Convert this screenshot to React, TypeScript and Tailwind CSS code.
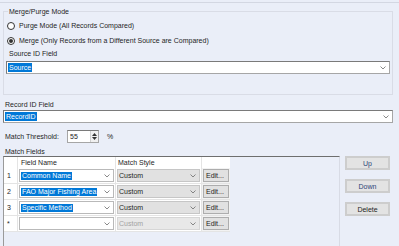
import React from "react";

const rows = [
  { id: "1", field: "Common Name" },
  { id: "2", field: "FAO Major Fishing Area" },
  { id: "3", field: "Specific Method" },
  { id: "*", field: "" },
];

function Chevron({ className = "" }: { className?: string }) {
  return (
    <svg width="6" height="4" viewBox="0 0 6 4" className={className} aria-hidden="true">
      <path d="M0.5 0.5 L3 3 L5.5 0.5" fill="none" stroke="#6b6b6b" strokeWidth="0.8" />
    </svg>
  );
}

function Radio({ checked, label }: { checked?: boolean; label: string }) {
  return (
    <div className="flex h-[13px] items-center pl-[3px]">
      <span className="flex h-[8px] w-[8px] items-center justify-center rounded-full border border-[#333] bg-white">
        {checked && <span className="h-[4px] w-[4px] rounded-full bg-[#333]" />}
      </span>
      <span className="ml-[4px]">{label}</span>
    </div>
  );
}

function ComboInput({ value, className = "" }: { value: string; className?: string }) {
  return (
    <div
      className={`flex h-[13px] items-center justify-between border border-[#a6a6a6] border-t-[#7a7a7a] border-l-[#7a7a7a] bg-white pl-[1px] pr-[3px] ${className}`}
    >
      <span className="bg-[#0078d7] px-px leading-[9px] text-white">{value}</span>
      <Chevron />
    </div>
  );
}

function SideButton({ label, className = "" }: { label: string; className?: string }) {
  return (
    <button className={`flex h-[14px] w-[45px] items-center justify-center border-2 border-[#cdcdcd] bg-[#e3e3e3] leading-none ${className}`}>
      {label}
    </button>
  );
}

export default function App() {
  return (
    <div className="h-[246px] w-[399px] overflow-hidden bg-[#eaeef8] font-['Liberation_Sans',Arial,sans-serif] text-[7px] leading-[9px] text-[#1e1e1e]">
      <div className="mt-[2px] border-t border-[#d3d7e2]" />

      <fieldset className="ml-[3px] mt-[4px] w-[390px] border border-[#d9dce6]">
        <legend className="ml-[4px] px-px leading-[9px]">Merge/Purge Mode</legend>
        <div className="mt-[3px]">
          <Radio label="Purge Mode (All Records Compared)" />
        </div>
        <div className="mt-[2px]">
          <Radio checked label="Merge (Only Records from a Different Source are Compared)" />
        </div>
        <div className="flex h-[13px] items-center pl-[5px]">Source ID Field</div>
        <ComboInput value="Source" className="ml-[2px] mt-[1px] w-[384px]" />
        <div className="h-[20px]" />
      </fieldset>

      <div className="flex h-[15px] items-center pl-[5px] pt-[3px]">Record ID Field</div>
      <ComboInput value="RecordID" className="ml-[3px] w-[390px]" />

      <div className="mt-[7px] flex h-[13px] items-center">
        <span className="ml-[5px] w-[62px]">Match Threshold:</span>
        <div className="flex h-[13px] w-[32px] items-center justify-between border border-[#a6a6a6] border-t-[#7a7a7a] bg-white pl-[2px]">
          <span>55</span>
          <div className="flex h-full w-[8px] flex-col items-center justify-center gap-[1px] border-l border-[#d0d0d0] bg-[#f0f0f0]">
            <svg width="5" height="3" viewBox="0 0 5 3"><path d="M0 3 L2.5 0 L5 3 Z" fill="#333" /></svg>
            <svg width="5" height="3" viewBox="0 0 5 3"><path d="M0 0 L2.5 3 L5 0 Z" fill="#333" /></svg>
          </div>
        </div>
        <span className="ml-[8px]">%</span>
      </div>

      <div className="flex h-[13px] items-center pl-[5px] pt-[3px]">Match Fields</div>

      <div className="flex">
        <div className="ml-[3px] h-[100px] w-[337px] border-t border-l border-r border-t-[#6e6e6e] border-l-[#9a9a9a] border-r-[#d8dbe5]">
          <div className="flex h-[11px] w-[226px] bg-white">
            <div className="w-[14px] border-r border-[#e4e4e4]" />
            <div className="flex w-[98px] items-center border-r border-[#e4e4e4] pl-[3px]">Field Name</div>
            <div className="flex w-[86px] items-center border-r border-[#e4e4e4] pl-[2px]">Match Style</div>
            <div className="w-[28px]" />
          </div>
          {rows.map((row) => (
            <div key={row.id} className="flex h-[16px] w-[226px]">
              <div className="flex w-[14px] items-center border-b border-r border-[#e4e4e4] bg-white pl-[3px]">
                {row.id}
              </div>
              <div className="w-[98px] border-b border-r border-[#e4e4e4] bg-white p-px">
                <div className="flex h-full items-center justify-between border border-[#b9b9b9] pl-px pr-[3px]">
                  {row.field ? (
                    <span className="bg-[#0078d7] px-px leading-[8px] text-white">{row.field}</span>
                  ) : (
                    <span />
                  )}
                  <Chevron />
                </div>
              </div>
              <div className="w-[86px] border-b border-r border-[#e4e4e4] bg-white p-px">
                <div
                  className={`flex h-full items-center justify-between border pl-px pr-[3px] ${
                    row.id === "*"
                      ? "border-[#d6d6d6] bg-[#e8e8e8] text-[#a2a2a2]"
                      : "border-[#c6c6c6] bg-[#e1e1e1]"
                  }`}
                >
                  <span>Custom</span>
                  <Chevron />
                </div>
              </div>
              <div className="w-[28px] border-b border-[#e4e4e4] bg-[#f2f2f2] p-px">
                <button className="flex h-full w-full items-center border border-[#adadad] bg-[#e1e1e1] pl-[2px]">
                  Edit...
                </button>
              </div>
            </div>
          ))}
        </div>

        <div className="ml-[5px] flex flex-col">
          <SideButton label="Up" className="text-[#2e4478]" />
          <SideButton label="Down" className="mt-[9px] text-[#2e4478]" />
          <SideButton label="Delete" className="mt-[9px]" />
        </div>
      </div>
    </div>
  );
}
